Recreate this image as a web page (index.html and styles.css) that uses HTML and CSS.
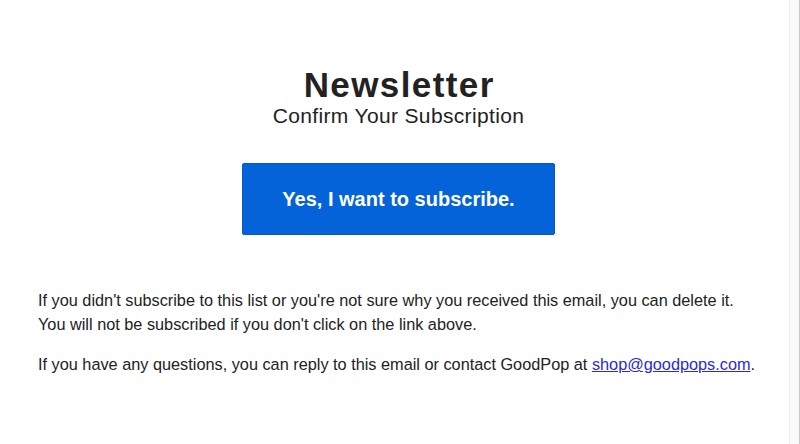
FILE: index.html
```html
<!DOCTYPE html>
<html lang="en">
<head>
    <meta charset="UTF-8">
    <meta name="viewport" content="width=device-width, initial-scale=1.0">
    <title>Newsletter - Confirm Your Subscription</title>
    <link rel="stylesheet" href="styles.css">
</head>
<body>

    <div class="page">
        <div class="email">
            <div class="header">
                <h1>Newsletter</h1>
                <div class="subtitle">Confirm Your Subscription</div>
            </div>

            <div class="action">
                <a class="confirm-button" href="#">Yes, I want to subscribe.</a>
            </div>

            <div class="notes">
                <p>If you didn't subscribe to this list or you're not sure why you received this email, you can delete it.<br>
                You will not be subscribed if you don't click on the link above.</p>
                <p>If you have any questions, you can reply to this email or contact GoodPop at <a href="mailto:shop@goodpops.com">shop@goodpops.com</a>.</p>
            </div>
        </div>

        <div class="scroll-track"></div>
    </div>

</body>
</html>
```

FILE: styles.css
```css
body {
    font-family: "Liberation Sans", Arial, Helvetica, sans-serif;
    background-color: #fff;
    color: #222;
    margin: 0;
}

.page {
    display: flex;
    height: 444px;
}

.email {
    flex: 1;
    padding: 66px 30px 0 38px;
}

.header {
    text-align: center;
}

h1 {
    margin: 0;
    font-size: 35px;
    line-height: 38px;
    font-weight: bold;
    letter-spacing: 1.4px;
    text-indent: 1.4px;
    color: #222;
}

.subtitle {
    font-size: 21px;
    line-height: 23px;
    letter-spacing: 0.35px;
    color: #222;
}

.action {
    display: flex;
    justify-content: center;
    margin-top: 36px;
}

.confirm-button {
    display: flex;
    align-items: center;
    justify-content: center;
    width: 313px;
    height: 72px;
    box-sizing: border-box;
    background-color: #0563d9;
    border: 1px solid #0a58c0;
    border-radius: 2px;
    color: #fff;
    font-size: 20px;
    font-weight: bold;
    text-decoration: none;
}

.notes {
    margin-top: 53px;
    font-size: 16.3px;
    line-height: 24px;
    color: #222;
}

.notes p {
    margin: 0 0 16px 0;
}

.notes a {
    color: #2a2ad8;
}

.scroll-track {
    width: 11px;
    background-color: #fafafa;
    border-left: 1px solid #efefef;
    border-right: 1px solid #c9c9c9;
    box-sizing: border-box;
}
```
